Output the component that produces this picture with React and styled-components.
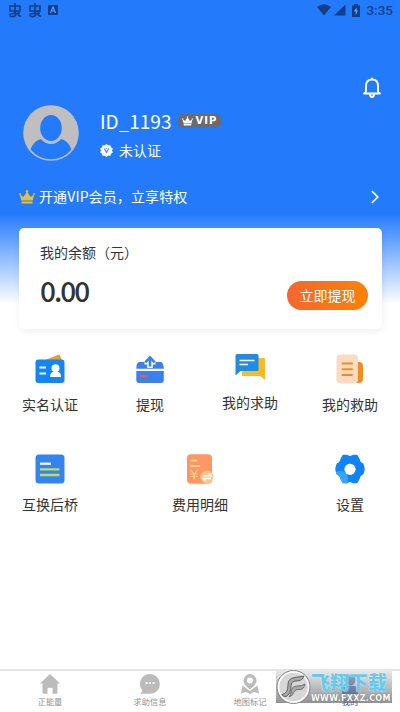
import styled, { createGlobalStyle } from "styled-components";

const MainBlue = "#237bfb";
const StatusColor = "#123f87";

const GlobalStyle = createGlobalStyle`
  * {
    box-sizing: border-box;
  }
  body {
    margin: 0;
    background: #fff;
    font-family: "Noto Sans CJK SC", "Noto Sans", sans-serif;
    color: #333;
  }
  p {
    margin: 0;
  }
  svg {
    display: block;
    flex-shrink: 0;
  }
`;

const Page = styled.div`
  width: 400px;
  height: 712px;
  display: flex;
  flex-direction: column;
  position: relative;
  overflow: hidden;
`;

const Top = styled.header`
  height: 341px;
  background: linear-gradient(${MainBlue} 213px, #fff 304px);
`;

const StatusBar = styled.div`
  height: 20px;
  padding: 0 7px 0 8px;
  display: flex;
  align-items: center;
  justify-content: space-between;
`;

const StatusGroup = styled.div`
  display: flex;
  align-items: center;
  gap: ${(props) => props.$gap}px;
  color: ${StatusColor};
`;

const Clock = styled.span`
  font-family: Roboto, sans-serif;
  font-size: 13.5px;
  font-weight: 500;
  line-height: 20px;
`;

const BellRow = styled.div`
  height: 82px;
  padding: 57px 18px 0 0;
  display: flex;
  justify-content: flex-end;
`;

const Profile = styled.div`
  height: 64px;
  padding: 3px 0 0 23px;
  display: flex;
  gap: 21px;
`;

const ProfileText = styled.div`
  display: flex;
  flex-direction: column;
  color: #fff;
`;

const NameRow = styled.div`
  height: 32px;
  padding-bottom: 1px;
  display: flex;
  align-items: center;
  font-size: 19px;
  gap: 7px;
`;

const VipTag = styled.span`
  width: 43px;
  height: 14px;
  padding-left: 4px;
  border-radius: 5px;
  background: #696b70;
  display: flex;
  align-items: center;
  gap: 2px;
  font: bold 10px/14px "DejaVu Sans", sans-serif;
  letter-spacing: 1px;
`;

const VerifyRow = styled.div`
  height: 26px;
  display: flex;
  align-items: center;
  gap: 6px;
  font-size: 14px;
`;

const VipRow = styled.div`
  height: 62px;
  padding: 0 20px 0 19px;
  display: flex;
  align-items: center;
  color: #fff;
  font-size: 14px;
  line-height: 20px;
  p {
    flex: 1;
    padding: 0 0 3px 4px;
    letter-spacing: 0.12px;
  }
`;

const BalanceCard = styled.section`
  height: 101px;
  margin: 0 18px 0 19px;
  padding: 14px 14px 0 21px;
  border-radius: 5px;
  background: #fff;
  box-shadow: 1px 2px 7px rgba(0, 0, 0, 0.07);
`;

const CardLabel = styled.p`
  font-size: 14px;
  line-height: 20px;
`;

const BalanceLine = styled.div`
  height: 62px;
  display: flex;
  align-items: center;
  justify-content: space-between;
`;

const Balance = styled.p`
  font-size: 28px;
  font-weight: 500;
  line-height: 40px;
  letter-spacing: -2px;
  padding-bottom: 6px;
`;

const CashButton = styled.button`
  width: 81px;
  height: 29px;
  margin-top: 4px;
  padding: 0 0 1px;
  border: 0;
  border-radius: 15px;
  background: linear-gradient(90deg, #f3672f, #fc8206);
  color: #fff;
  font-family: inherit;
  font-size: 14px;
`;

const MenuRow = styled.div`
  height: 100px;
  display: flex;
  justify-content: space-between;
`;

const MenuItem = styled.div`
  width: 100px;
  padding-top: ${(props) => props.$top}px;
  display: flex;
  flex-direction: column;
  align-items: center;
  gap: 10px;
  p {
    font-size: 14px;
    line-height: 20px;
  }
`;

const TabBar = styled.nav`
  height: 43px;
  margin-top: auto;
  border-top: 2px solid #e5e5e5;
  display: flex;
`;

const Tab = styled.div`
  flex: 1;
  padding-top: 3px;
  display: flex;
  flex-direction: column;
  align-items: center;
  gap: 1px;
  color: ${(props) => (props.$active ? "#1f62c8" : "#bbb")};
  p {
    font-size: 8.2px;
    line-height: 13px;
    color: ${(props) => (props.$active ? "#1f62c8" : "#929292")};
  }
`;

const Watermark = styled.div`
  position: absolute;
  left: 276px;
  top: 671px;
  width: 116px;
  height: 32px;
  display: flex;
  align-items: center;
  background: linear-gradient(
    rgba(215, 215, 215, 0.6),
    rgba(100, 100, 100, 0.7)
  );
`;

const WatermarkText = styled.div`
  width: 80px;
  height: 32px;
  display: flex;
  flex-direction: column;
`;

const WatermarkName = styled.span`
  height: 22px;
  font-size: 19px;
  font-weight: 900;
  line-height: 21px;
  white-space: nowrap;
  color: #68c9ec;
  text-shadow: 0 0 1px #fff;
`;

const WatermarkUrl = styled.span`
  font: bold 8px/9px "DejaVu Sans", sans-serif;
  letter-spacing: 0.3px;
  padding-top: 1px;
  white-space: nowrap;
  color: #fff;
  text-shadow: 0 0 1px #555;
`;

function BugIcon() {
  return (
    <svg width="14" height="15" viewBox="0 0 14 15" fill="none" stroke="currentColor" strokeWidth="1.6">
      <path d="M2 3h10v5H2zM7 0v11.5M10.300 8.500v3.200q0 1.500 3 1.300" />
      <path d="M12 10.500H4.500q-2.500 0-2.500 1.600t2.500 1.500q3 0 3.500-2.500" />
    </svg>
  );
}

function CrownIcon({ width, height, color }) {
  return (
    <svg width={width} height={height} viewBox="0 0 16 14" fill={color}>
      <path d="M2.3 10.5.8 4.5l3.7 2.4L8 1.6l3.5 5.3 3.7-2.4-1.5 6zM2.5 11.5h11v2h-11z" />
      <circle cx="1" cy="4" r="1" />
      <circle cx="8" cy="1.3" r="1.2" />
      <circle cx="15" cy="4" r="1" />
    </svg>
  );
}

function Avatar() {
  return (
    <svg width="56" height="56" viewBox="0 0 56 56">
      <circle cx="28" cy="28" r="27.8" fill="#bfbfbf" />
      <path
        d="M7.500 44.500C10 38 14 34.500 19.500 33.700h17C42 34.500 46 38 48.500 44.500A26.300 26.300 0 0 1 7.500 44.500Z"
        fill={MainBlue}
      />
      <ellipse cx="28" cy="23" rx="12.300" ry="14.500" fill={MainBlue} stroke="#bfbfbf" strokeWidth="3" />
    </svg>
  );
}

function IdCardIcon() {
  return (
    <svg width="30" height="30" viewBox="0 0 30 30">
      <path d="M9 6.500 23.300.8q1.400-.4 1.800.8l1.800 5z" fill="#f29a27" />
      <rect x=".5" y="5.500" width="29" height="23.500" rx="3" fill="#1186f6" />
      <path d="M4.500 13.500H11M4.500 19.500H11" stroke="#fff" strokeWidth="2" />
      <circle cx="20.500" cy="14.300" r="4" fill="#fff" />
      <path d="M15 23q0-4.800 3.500-5.200h4q3.500.4 3.500 5.200z" fill="#fff" />
    </svg>
  );
}

function WithdrawIcon() {
  return (
    <svg width="30" height="30" viewBox="0 0 30 30">
      <path d="M4 8h5.500v2.500h2.700V14h5.600v-3.500h2.700V8H26q2.500.5 2.800 6.800H1.300Q1.500 8.500 4 8Z" fill="#3b80ed" />
      <path d="M1.300 17h27.500v9q0 3-3 3H4.300q-3 0-3-3z" fill="#3b80ed" />
      <path d="M15 12.500V4M10.300 8.300 15 3.300l4.700 5" fill="none" stroke="#3b80ed" strokeWidth="2.600" />
      <path d="M5 22h7.500" stroke="#e0605a" strokeWidth="2.200" />
    </svg>
  );
}

function ChatIcon() {
  return (
    <svg width="30" height="30" viewBox="0 0 30 30">
      <path d="M7 6h22q1 0 1 1v21l-4.500-4H7z" fill="#fdb91e" />
      <path d="M2 2h20q1.500 0 1.500 1.500v14q0 1.500-1.500 1.500H5.500L.5 23.500v-20Q.5 2 2 2Z" fill="#208be3" />
      <path d="M4.500 8.500h15M4.500 12.500h8.500" stroke="#fff" strokeWidth="1.600" />
    </svg>
  );
}

function NotesIcon() {
  return (
    <svg width="30" height="30" viewBox="0 0 30 30">
      <path d="M20 8h4q4 0 4 4v12.500Q28 29 23.500 29H20z" fill="#f28b20" />
      <rect x="1.500" y=".5" width="21.500" height="29" rx="4" fill="#fbdcc3" />
      <path d="M7.500 9.500h9.500M7.500 15.300h9.500M7.500 21h9.500" stroke="#f28a27" strokeWidth="1.900" strokeLinecap="round" />
    </svg>
  );
}

function ListIcon() {
  return (
    <svg width="30" height="30" viewBox="0 0 30 30">
      <rect x=".5" y=".5" width="29" height="29" rx="3.500" fill="#3384f1" />
      <path d="M5 9.700h11" stroke="#fff" strokeWidth="2.200" />
      <path d="M5 15.300h19.500M5 21h19.500" stroke="#c3db5a" strokeWidth="2.300" />
    </svg>
  );
}

function FeeIcon() {
  return (
    <svg width="30" height="30" viewBox="0 0 30 30">
      <rect x="2" y=".3" width="25" height="29.500" rx="4" fill="#fd9766" />
      <path d="M5.500 6.500H12M5.500 12h9.500" stroke="#ffd391" strokeWidth="2.200" />
      <path d="m5.500 15.500 3.700 4.500 3.700-4.500M9.200 20v5M5.500 20h7.400M5.500 22.500h7.400" fill="none" stroke="#ffd391" strokeWidth="1.100" />
      <circle cx="22" cy="23" r="6.500" fill="#ffc68f" />
      <path d="M18 21.800h8l-2.500-2.300M26 24.500h-8l2.500 2.300" fill="none" stroke="#fff" strokeWidth="1.300" />
    </svg>
  );
}

function GearIcon() {
  return (
    <svg width="30" height="30" viewBox="0 0 30 30">
      <path
        d="M8.800.7h2.700q1 0 1.500.6 2 1.600 4 0 .5-.6 1.500-.6h2.700q1.200 0 1.700 1l2 4 .2.900q.2 1.900 2.200 2.500.8.200 1.200.9l1 3.300q.4 1.700 0 3.400l-1 3.300q-.4.700-1.200.9-2 .6-2.200 2.500l-.2.900-2 4q-.5 1-1.700 1h-2.700q-1 0-1.500-.6-2-1.600-4 0-.5.600-1.500.6H8.800q-1.200 0-1.700-1l-2-4-.2-.9q-.2-1.900-2.200-2.500-.8-.2-1.200-.9l-1-3.300q-.4-1.700 0-3.400l1-3.300q.4-.7 1.200-.9 2-.6 2.200-2.500l.2-.9 2-4q.5-1 1.700-1z"
        fill="#1083f7"
      />
      <path d="M.8 18Q8.500 15.500 11.500 20q2.500 4 .7 8.900-.3.400-.7.400H8.800q-1.200 0-1.700-1l-2-4-.2-.9q-.2-1.900-2.200-2.500-.8-.2-1.200-.9z" fill="#38a4fe" />
      <circle cx="15" cy="15.300" r="5.600" fill="#fff" />
    </svg>
  );
}

function WatermarkLogo() {
  return (
    <svg width="35" height="36" viewBox="0 0 35 36">
      <circle cx="17.500" cy="18" r="16.500" fill="#d7d7d7" stroke="#858585" />
      <circle cx="17.500" cy="18" r="15" fill="none" stroke="#fff" strokeWidth="1.500" />
      <path
        d="M6 25.500q6-1 6-9.500 0-7 7-7.500l9-1.500q-1.500 5-8 5-4.500 0-5 5 0 8-5 10.500-3 .5-4-2Z"
        fill="#aaa"
        stroke="#606060"
        strokeWidth="1"
      />
      <path d="M15 23q0-5.500 6-6 5 0 8-2-1 6-6 5.500-4-.5-5 2.500-1.500 4-5 5 2-2 2-5Z" fill="#aaa" stroke="#606060" strokeWidth=".8" />
    </svg>
  );
}

const firstRow = [
  { name: "实名认证", icon: <IdCardIcon />, top: 13 },
  { name: "提现", icon: <WithdrawIcon />, top: 13 },
  { name: "我的求助", icon: <ChatIcon />, top: 11 },
  { name: "我的救助", icon: <NotesIcon />, top: 13 },
];

const secondRow = [
  { name: "互换后桥", icon: <ListIcon /> },
  { name: "费用明细", icon: <FeeIcon /> },
  { name: "设置", icon: <GearIcon /> },
];

function App() {
  return (
    <Page>
      <GlobalStyle />
      <Top>
        <StatusBar>
          <StatusGroup $gap={6}>
            <BugIcon />
            <BugIcon />
            <svg width="10" height="10" viewBox="0 0 10 10">
              <rect width="10" height="10" rx="1" fill="currentColor" />
              <path d="m2.500 8 2.500-6 2.500 6M3.400 6h3.200" fill="none" stroke="#5ca0ff" strokeWidth="1.200" />
            </svg>
          </StatusGroup>
          <StatusGroup $gap={3}>
            <svg width="14" height="12" viewBox="0 0 14 12" fill="currentColor">
              <path d="M0 3q7-5.500 14 0L7 11.500z" />
            </svg>
            <svg width="12" height="12" viewBox="0 0 12 12" fill="currentColor">
              <path d="M11.500.5v11H0z" />
            </svg>
            <svg width="14" height="13" viewBox="0 0 14 13">
              <path d="M5 1.500V0h4v1.500h2V13H3V1.500z" fill="currentColor" />
              <path d="M7.800 3 5 7.500h1.700V11L9 6.500H7.500z" fill="#6aa6fb" />
            </svg>
            <Clock>3:35</Clock>
          </StatusGroup>
        </StatusBar>
        <BellRow>
          <svg width="20" height="22" viewBox="0 0 20 22" fill="none" stroke="#fff" strokeWidth="1.900" strokeLinejoin="round" strokeLinecap="round">
            <path d="M2 16.500h16q-2-.6-2-2.500V9q0-6.500-6-6.500T4 9v5q0 1.900-2 2.500ZM8 17q0 3 2 3t2-3M10 1.500v1" />
          </svg>
        </BellRow>
        <Profile>
          <Avatar />
          <ProfileText>
            <NameRow>
              ID_1193
              <VipTag>
                <CrownIcon width={11} height={10} color="#fff" />
                VIP
              </VipTag>
            </NameRow>
            <VerifyRow>
              <svg width="13" height="13" viewBox="0 0 13 13">
                <path d="m6.500 0 1.700 1.300 2.200-.1.600 2 1.800 1.300-.7 2 .7 2-1.800 1.300-.6 2-2.200-.1L6.500 13l-1.700-1.300-2.200.1-.6-2L.2 8.500l.7-2-.7-2L2 3.200l.6-2 2.200.1z" fill="#fff" />
                <path d="m4.300 4.500 2.200 4 2.200-4M6.500 5v-.8" fill="none" stroke="#488cfd" strokeWidth="1.200" />
              </svg>
              未认证
            </VerifyRow>
          </ProfileText>
        </Profile>
        <VipRow>
          <CrownIcon width={16} height={14} color="#edbd35" />
          <p>开通VIP会员，立享特权</p>
          <svg width="10" height="14" viewBox="0 0 10 14" fill="none" stroke="#fff" strokeWidth="1.700">
            <path d="m1.800 1 6 6-6 6" />
          </svg>
        </VipRow>
        <BalanceCard>
          <CardLabel>我的余额（元）</CardLabel>
          <BalanceLine>
            <Balance>0.00</Balance>
            <CashButton>立即提现</CashButton>
          </BalanceLine>
        </BalanceCard>
      </Top>
      <MenuRow>
        {firstRow.map((item) => (
          <MenuItem key={item.name} $top={item.top}>
            {item.icon}
            <p>{item.name}</p>
          </MenuItem>
        ))}
      </MenuRow>
      <MenuRow>
        {secondRow.map((item) => (
          <MenuItem key={item.name} $top={13}>
            {item.icon}
            <p>{item.name}</p>
          </MenuItem>
        ))}
      </MenuRow>
      <TabBar>
        <Tab>
          <svg width="20" height="20" viewBox="0 0 20 20" fill="currentColor">
            <path d="M10 0 20 9.500H17.500V19q0 .8-.8.800H12.500v-6h-5v6H3.300q-.8 0-.8-.8V9.500H0z" />
          </svg>
          <p>正能量</p>
        </Tab>
        <Tab>
          <svg width="20" height="20" viewBox="0 0 20 20">
            <path d="M10 0a9.900 9.900 0 1 1 0 19.800H.5l2-3.300A9.900 9.900 0 0 1 10 0Z" fill="currentColor" />
            <path d="M5.500 9h2M9 9h2M12.500 9h2" stroke="#fff" strokeWidth="2" />
          </svg>
          <p>求助信息</p>
        </Tab>
        <Tab>
          <svg width="18" height="20" viewBox="0 0 18 20" fill="currentColor">
            <path fillRule="evenodd" d="M9 0a6.500 6.500 0 0 1 6.500 6.500c0 4.500-6.500 9-6.500 9s-6.500-4.500-6.500-9A6.500 6.500 0 0 1 9 0Zm0 3.500a3 3 0 1 0 0 6 3 3 0 0 0 0-6Z" />
            <path d="M1.500 11.500 9 17l7.500-5.500L18 19.500l-5-1.500-4 2-4-2-5 1.500z" />
          </svg>
          <p>地图标记</p>
        </Tab>
        <Tab $active>
          <svg width="18" height="20" viewBox="0 0 18 20" fill="currentColor">
            <circle cx="9" cy="6" r="5.500" />
            <path d="M1 20v-4q0-4 4-4h8q4 0 4 4v4z" />
          </svg>
          <p>我的</p>
        </Tab>
      </TabBar>
      <Watermark>
        <WatermarkLogo />
        <WatermarkText>
          <WatermarkName>飞翔下载</WatermarkName>
          <WatermarkUrl>WWW.FXXZ.COM</WatermarkUrl>
        </WatermarkText>
      </Watermark>
    </Page>
  );
}

export default App;
